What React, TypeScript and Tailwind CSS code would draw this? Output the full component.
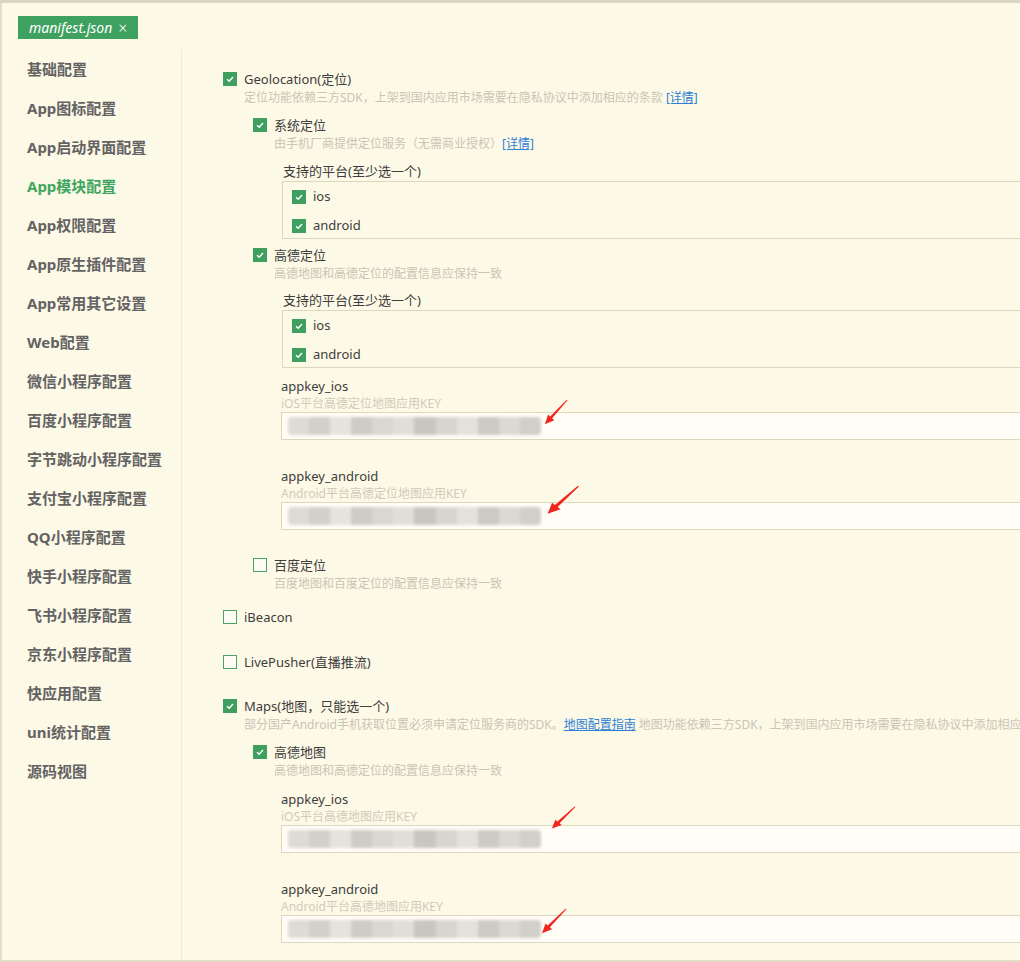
import React from 'react'

const font = { fontFamily: '"Noto Sans", "Noto Sans CJK SC", sans-serif' }

const navItems = [
  '基础配置', 'App图标配置', 'App启动界面配置', 'App模块配置', 'App权限配置',
  'App原生插件配置', 'App常用其它设置', 'Web配置', '微信小程序配置', '百度小程序配置',
  '字节跳动小程序配置', '支付宝小程序配置', 'QQ小程序配置', '快手小程序配置', '飞书小程序配置',
  '京东小程序配置', '快应用配置', 'uni统计配置', '源码视图',
]

function Box({ checked }: { checked: boolean }) {
  if (!checked) {
    return <span className="w-[14px] h-[14px] shrink-0 border border-[#4aa466] bg-[#fffdf3]" />
  }
  return (
    <span className="w-[14px] h-[14px] shrink-0 bg-[#3e9f5f] flex items-center justify-center">
      <svg width="10" height="10" viewBox="0 0 10 10">
        <polyline points="2,5.2 4.2,7.2 8,3" fill="none" stroke="white" strokeWidth="1.4" />
      </svg>
    </span>
  )
}

function Option({ label, desc, checked, children }: { label: string; desc?: React.ReactNode; checked: boolean; children?: React.ReactNode }) {
  return (
    <div>
      <div className="flex items-center gap-[7px] h-[20px]">
        <Box checked={checked} />
        <span className="text-[13px] leading-[20px] text-[#3d3d3d]">{label}</span>
      </div>
      {desc && (
        <div className="pl-[21px] h-[17px] text-[12px] leading-[17px] text-[#c9c5b4] whitespace-nowrap">{desc}</div>
      )}
      {children}
    </div>
  )
}

function Platforms({ className }: { className: string }) {
  return (
    <div className={`ml-[29px] ${className}`}>
      <div className="h-[19px] leading-[19px] text-[13px] text-[#3d3d3d] pl-px">支持的平台(至少选一个)</div>
      <div className="w-[800px] h-[58px] border border-[#dcd8bf] pl-[9px] pt-[5px] flex flex-col gap-[9px]">
        {['ios', 'android'].map(p => (
          <div key={p} className="flex items-center gap-[7px] h-[20px]">
            <Box checked />
            <span className="text-[13px] text-[#3d3d3d]">{p}</span>
          </div>
        ))}
      </div>
    </div>
  )
}

const blurA = ['#dedbd4', '#d3d0c9', '#e6e3dc', '#cfccc5', '#dad7d0', '#e1ded7', '#c9c6bf', '#d8d5ce', '#e4e1da', '#cdcac3', '#dcd9d2', '#d2cfc8']

function Arrow({ className }: { className: string }) {
  return (
    <svg className={`absolute ${className}`} viewBox="0 0 28 30" preserveAspectRatio="none">
      <polygon
        points="2,27 12.1,22.8 9.9,20.7 26.4,1.3 25.6,0.7 7.7,18.7 5.5,16.6"
        fill="#f0251d"
      />
    </svg>
  )
}

function KeyField({ label, desc, className, arrow }: { label: string; desc: string; className: string; arrow: string }) {
  return (
    <div className={className}>
      <div className="h-[18px] leading-[18px] text-[13px] text-[#3d3d3d]">{label}</div>
      <div className="h-[17px] leading-[17px] text-[12px] text-[#cfcbba]">{desc}</div>
      <div className="relative w-[800px] h-[28px] border border-[#dcd8bf] bg-[#fffdf6]">
        <div className="absolute left-[6px] top-[4px] w-[253px] h-[18px] flex blur-[1.5px] rounded-sm overflow-hidden">
          {blurA.map((c, i) => (
            <div key={i} className="flex-1 h-full" style={{ backgroundColor: c }} />
          ))}
        </div>
        <Arrow className={arrow} />
      </div>
    </div>
  )
}

export default function App() {
  return (
    <div style={font} className="w-[1020px] h-[962px] overflow-hidden bg-[#fdf9e7] border-t-[3px] border-t-[#d9d5c0] flex flex-col">
      <div className="h-[47px] shrink-0 border-l-2 border-[#e3dfc6] pl-[16px] pt-[12px]">
        <div className="inline-flex items-center gap-[6px] h-[23px] px-[11px] bg-[#3fa160] text-white text-[14px] italic">
          <span>manifest.json</span>
          <span className="not-italic text-[16px] font-light leading-none">×</span>
        </div>
      </div>

      <div className="flex flex-1 min-h-0 border-b-2 border-[#e1ddc5]">
        <div className="w-[182px] shrink-0 border-l-2 border-[#e3dfc6] pl-[25px]">
          <nav className="border-r border-[#efead3] h-full">
            {navItems.map(item => (
              <div
                key={item}
                className={`h-[39px] flex items-center text-[15px] font-bold ${item === 'App模块配置' ? 'text-[#3fa660]' : 'text-[#636363]'}`}
              >
                {item}
              </div>
            ))}
          </nav>
        </div>

        <main className="flex-1 min-w-0 overflow-hidden pl-[41px] pt-[19px]">
          <Option
            checked
            label="Geolocation(定位)"
            desc={<>定位功能依赖三方SDK，上架到国内应用市场需要在隐私协议中添加相应的条款 <span className="text-[#2f80d6] underline">[详情]</span></>}
          />
          <div className="ml-[30px] mt-[9px]">
            <Option
              checked
              label="系统定位"
              desc={<>由手机厂商提供定位服务（无需商业授权）<span className="text-[#2f80d6] underline">[详情]</span></>}
            >
              <Platforms className="mt-[10px] -ml-px" />
            </Option>

            <div className="mt-[6px]">
              <Option checked label="高德定位" desc="高德地图和高德定位的配置信息应保持一致">
                <Platforms className="mt-[9px] -ml-px" />
                <div className="ml-[28px]">
                  <KeyField className="mt-[9px]" label="appkey_ios" desc="iOS平台高德定位地图应用KEY" arrow="left-[261px] -top-[14px] w-[26px] h-[28px]" />
                  <KeyField className="mt-[27px]" label="appkey_android" desc="Android平台高德定位地图应用KEY" arrow="left-[263px] -top-[18px] w-[36px] h-[32px]" />
                </div>
              </Option>
            </div>

            <div className="mt-[25px]">
              <Option checked={false} label="百度定位" desc="百度地图和百度定位的配置信息应保持一致" />
            </div>
          </div>

          <div className="mt-[15px]">
            <Option checked={false} label="iBeacon" />
          </div>
          <div className="mt-[25px]">
            <Option checked={false} label="LivePusher(直播推流)" />
          </div>
          <div className="mt-[24px]">
            <Option
              checked
              label="Maps(地图，只能选一个)"
              desc={<>部分国产Android手机获取位置必须申请定位服务商的SDK。<span className="text-[#2f80d6] underline">地图配置指南</span> 地图功能依赖三方SDK，上架到国内应用市场需要在隐私协议中添加相应的条款</>}
            />
          </div>
          <div className="ml-[30px] mt-[9px]">
            <Option checked label="高德地图" desc="高德地图和高德定位的配置信息应保持一致">
              <div className="ml-[28px]">
                <KeyField className="mt-[11px]" label="appkey_ios" desc="iOS平台高德地图应用KEY" arrow="left-[268px] -top-[20px] w-[27px] h-[25px]" />
                <KeyField className="mt-[27px]" label="appkey_android" desc="Android平台高德地图应用KEY" arrow="left-[258px] -top-[8px] w-[28px] h-[28px]" />
              </div>
            </Option>
          </div>
        </main>
      </div>
    </div>
  )
}
